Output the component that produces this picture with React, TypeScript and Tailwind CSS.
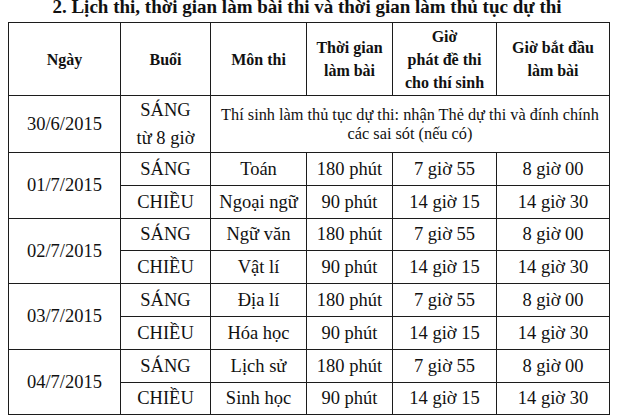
import React from "react";

const rows: { date: string; items: [string, string, string, string, string][] }[] = [
  {
    date: "01/7/2015",
    items: [
      ["SÁNG", "Toán", "180 phút", "7 giờ 55", "8 giờ 00"],
      ["CHIỀU", "Ngoại ngữ", "90 phút", "14 giờ 15", "14 giờ 30"],
    ],
  },
  {
    date: "02/7/2015",
    items: [
      ["SÁNG", "Ngữ văn", "180 phút", "7 giờ 55", "8 giờ 00"],
      ["CHIỀU", "Vật lí", "90 phút", "14 giờ 15", "14 giờ 30"],
    ],
  },
  {
    date: "03/7/2015",
    items: [
      ["SÁNG", "Địa lí", "180 phút", "7 giờ 55", "8 giờ 00"],
      ["CHIỀU", "Hóa học", "90 phút", "14 giờ 15", "14 giờ 30"],
    ],
  },
  {
    date: "04/7/2015",
    items: [
      ["SÁNG", "Lịch sử", "180 phút", "7 giờ 55", "8 giờ 00"],
      ["CHIỀU", "Sinh học", "90 phút", "14 giờ 15", "14 giờ 30"],
    ],
  },
];

const serif = "font-['Liberation_Serif','Times_New_Roman',serif]";
const td = `border border-[#1c1c1c] text-center align-middle p-0 text-[18.5px] leading-[24px] text-[#111] ${serif}`;
const th = `border border-[#1c1c1c] text-center align-middle p-0 text-[16px] leading-[23px] font-bold text-[#111] ${serif}`;

export default function App() {
  return (
    <div className={`w-[626px] h-[420px] bg-white overflow-hidden ${serif}`}>
      <div className="-mt-[3px] h-[25px] text-center text-[19px] leading-[20px] font-bold text-[#111] pr-[12px] whitespace-nowrap">
        2. Lịch thi, thời gian làm bài thi và thời gian làm thủ tục dự thi
      </div>
      <table className={`ml-[8px] w-[601px] border-collapse table-fixed ${serif}`}>
        <colgroup>
          <col className="w-[112px]" />
          <col className="w-[90px]" />
          <col className="w-[96px]" />
          <col className="w-[86px]" />
          <col className="w-[104px]" />
          <col className="w-[113px]" />
        </colgroup>
        <tbody>
          <tr className="h-[73px]">
            <td className={th}>Ngày</td>
            <td className={th}>Buổi</td>
            <td className={th}>Môn thi</td>
            <td className={th}>
              Thời gian
              <br />
              làm bài
            </td>
            <td className={th}>
              Giờ
              <br />
              phát đề thi
              <br />
              cho thí sinh
            </td>
            <td className={th}>
              Giờ bắt đầu
              <br />
              làm bài
            </td>
          </tr>
          <tr className="h-[57px]">
            <td className={td}>30/6/2015</td>
            <td className={`${td} leading-[28px]`}>
              SÁNG
              <br />
              từ 8 giờ
            </td>
            <td
              colSpan={4}
              className={`border border-[#1c1c1c] text-center align-middle p-0 text-[16.3px] leading-[19px] text-[#111] ${serif}`}
            >
              Thí sinh làm thủ tục dự thi: nhận Thẻ dự thi và đính chính
              <br />
              các sai sót (nếu có)
            </td>
          </tr>
          {rows.map((g) =>
            g.items.map((it, i) => (
              <tr key={g.date + i} className="h-[32.8px]">
                {i === 0 && (
                  <td rowSpan={2} className={td}>
                    {g.date}
                  </td>
                )}
                {it.map((c, j) => (
                  <td key={j} className={td}>
                    {c}
                  </td>
                ))}
              </tr>
            ))
          )}
        </tbody>
      </table>
    </div>
  );
}
